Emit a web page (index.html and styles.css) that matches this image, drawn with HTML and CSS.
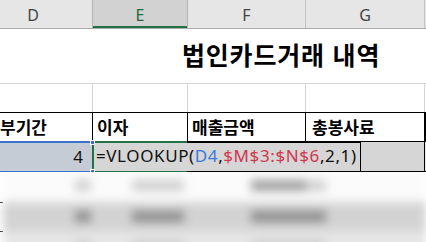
FILE: index.html
```html
<!DOCTYPE html>
<html lang="ko">
<head>
<meta charset="utf-8">
<link rel="stylesheet" href="styles.css">
</head>
<body>
<div class="sheet">
  <div class="colhdr">
    <div class="ch first">D</div>
    <div class="ch sel">E</div>
    <div class="ch">F</div>
    <div class="ch">G</div>
    <div class="ch last"></div>
  </div>
  <div class="row title-row">
    <div class="title">법인카드거래 내역</div>
  </div>
  <div class="row r2">
    <div class="c"></div><div class="c"></div><div class="c"></div><div class="c"></div><div class="c last"></div>
  </div>
  <div class="row r3">
    <div class="c hd">부기간</div>
    <div class="c hd">이자</div>
    <div class="c hd">매출금액</div>
    <div class="c hd pad">총봉사료</div>
    <div class="c last"></div>
  </div>
  <div class="row r4">
    <div class="d4">4<span class="hdl t"></span><span class="hdl b"></span></div>
    <div class="edit"><span>=VLOOKUP(</span><span class="ref1">D4</span><span>,</span><span class="ref2">$M$3:$N$6</span><span>,2,1)</span></div>
    <div class="g4"></div>
    <div class="h4"></div>
  </div>
  <div class="blurwrap">
    <div class="edge"></div>
    <div class="blur">
      <div class="br br5">
        <div class="blob b1 light"></div><div class="blob b2 light"></div><div class="blob b3"></div><div class="blob b4 light"></div>
      </div>
      <div class="br br6">
        <div class="blob b1"></div><div class="blob b2"></div><div class="blob b3"></div><div class="blob b4"></div>
      </div>
      <div class="br br7">
        <div class="blob b1 light"></div><div class="blob b2 light"></div><div class="blob b3 light"></div><div class="blob b4 light"></div>
      </div>
    </div>
  </div>
</div>
</body>
</html>
```

FILE: styles.css
```css
* { box-sizing: border-box; }
html, body { margin: 0; padding: 0; background: #fff; }
body { width: 426px; height: 242px; overflow: hidden; font-family: "Noto Sans", "Noto Sans CJK KR", sans-serif; }
.sheet { width: 426px; }

.colhdr {
  display: grid;
  grid-template-columns: 93px 95px 118px 119px 1fr;
  height: 29px;
  background: #e6e6e6;
  border-bottom: 1px solid #ababab;
}
.ch {
  border-right: 1px solid #c4c4c4;
  display: flex; align-items: center; justify-content: center;
  font-size: 16px; color: #444; padding-top: 2px;
}
.ch.first { padding-right: 26px; }
.ch.sel {
  background: #d2d2d2;
  color: #1e6b41;
  border-right-color: #b4b4b4;
  box-shadow: inset 0 -2px 0 #217346, -1px 0 0 #b4b4b4;
}
.ch.last { border-right: none; }

.row {
  display: grid;
  grid-template-columns: 93px 95px 118px 119px 1fr;
}
.title-row {
  display: block;
  height: 55px;
  border-bottom: 1px solid #d4d4d4;
  padding: 9px 0 0 182px;
}
.title {
  font-family: "Noto Sans CJK KR", sans-serif;
  font-weight: 700;
  font-size: 25px;
  letter-spacing: 0.8px;
  line-height: 32px;
  color: #000;
}
.r2 { height: 28px; }
.r2 .c { border-right: 1px solid #d4d4d4; }
.c.last { border-right: none; }

.r3 { height: 29px; border-top: 1px solid #000; }
.r3 .c { border-right: 1px solid #000; }
.hd {
  font-family: "Noto Sans CJK KR", sans-serif;
  font-weight: 700;
  font-size: 17px;
  line-height: 28px;
  padding-left: 4px;
  color: #000;
  white-space: nowrap;
}
.r3 .hd:first-child { padding-left: 0; }
.hd.pad { padding-left: 6px; }

.r4 { display: flex; height: 31px; }
.d4 {
  position: relative;
  width: 92px;
  background: #c6ccd6;
  border-top: 2px solid #3b72cc;
  border-bottom: 1px solid #3b72cc;
  text-align: right;
  padding-right: 9px;
  font-size: 17px;
  line-height: 27px;
  color: #111;
}
.hdl {
  position: absolute;
  right: -3px;
  width: 5px; height: 5px;
  background: #3b72cc;
  border: 1px solid #fff;
}
.hdl.t { top: -3px; }
.hdl.b { bottom: -3px; }
.edit {
  width: 269px;
  border-left: 2px solid #217346;
  border-right: 1px solid #000;
  background:
    linear-gradient(to right, #217346 93px, #000 93px) top left / 100% 2px no-repeat,
    linear-gradient(to right, #217346 93px, #000 93px) bottom left / 100% 1px no-repeat,
    #d6d6d6;
  font-size: 17px;
  line-height: 30px;
  padding-left: 2px;
  color: #111;
  white-space: nowrap;
  letter-spacing: 0.6px;
}
.ref1 { color: #3b78d8; }
.ref2 { color: #d2354f; }
.g4 {
  width: 64px;
  background: #d6d6d6;
  border-top: 1px solid #000;
  border-bottom: 1px solid #000;
  border-right: 1px solid #000;
}
.h4 {
  flex: 1;
  border-top: 1px solid #000;
  border-bottom: 1px solid #000;
  background: #e8e8e8;
}

.blurwrap { display: flex; height: 70px; overflow: hidden; }
.edge {
  width: 3px;
  background:
    linear-gradient(#000, #000) 0 30px / 3px 1px no-repeat,
    linear-gradient(#000, #000) 0 59px / 3px 1px no-repeat,
    #fff;
}
.blur { flex: 1; filter: blur(5px); margin-top: -4px; }
.br {
  display: grid;
  grid-template-columns: 90px 95px 118px 119px 1fr;
  height: 29px;
  position: relative;
}
.br5 { background: #fbfbfb; height: 34px; }
.br6 { background: #d3d3d3; }
.br7 { background: #e6e6e6; }
.blob { height: 11px; align-self: center; background: #8f8f8f; }
.blob.light { background: #d0d0d0; }
.b1 { width: 16px; justify-self: end; margin-right: 2px; }
.b2 { width: 52px; justify-self: end; margin-right: 4px; }
.b3 { width: 55px; justify-self: end; margin-right: 0; }
.b4 { width: 20px; justify-self: start; margin-left: 0; }
.br5 .b3 { background: #a0a0a0; }
```
